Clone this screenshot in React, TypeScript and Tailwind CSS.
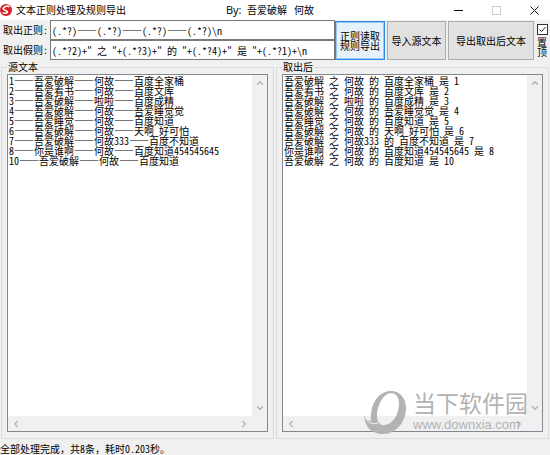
import React, { useState } from "react";
import { ChevronDown, ChevronLeft, ChevronRight, ChevronUp } from "lucide-react";

const SOURCE = [
  "1——吾爱破解——何故——百度全家桶",
  "2——吾爱看书——何故——百度文库",
  "3——吾爱破解——啦啦——百度成精",
  "4——吾爱破解——何故——吾爱睡觉觉",
  "5——吾爱睡觉——何故——百度知道",
  "6——吾爱破解——何故——天啊 好可怕",
  "7——吾爱破解——何故333——百度不知道",
  "8——你是谁啊——何故——百度知道454545645",
  "10——吾爱破解——何故——百度知道",
].join("\n");

const RESULT = [
  "吾爱破解 之 何故 的 百度全家桶 是 1",
  "吾爱看书 之 何故 的 百度文库 是 2",
  "吾爱破解 之 啦啦 的 百度成精 是 3",
  "吾爱破解 之 何故 的 吾爱睡觉觉 是 4",
  "吾爱睡觉 之 何故 的 百度知道 是 5",
  "吾爱破解 之 何故 的 天啊 好可怕 是 6",
  "吾爱破解 之 何故333 的 百度不知道 是 7",
  "你是谁啊 之 何故 的 百度知道454545645 是 8",
  "吾爱破解 之 何故 的 百度知道 是 10",
].join("\n");

function TitleBar() {
  return (
    <header className="flex h-5 items-center bg-white text-[10px] leading-5">
      <svg viewBox="0 0 24 24" className="h-3 w-3 shrink-0" aria-hidden="true">
        <circle cx="12" cy="12" r="12" fill="#d81e26" />
        <path
          d="M19 5.5C14 3 6.500 5 6.500 9.200c0 4.300 8.500 3.300 8.500 6.600 0 2.400-5 3.400-10 1.700"
          fill="none"
          stroke="#fff"
          strokeWidth="3.200"
        />
      </svg>
      <h1 className="ml-1 w-[210px] whitespace-nowrap">文本正则处理及规则导出</h1>
      <p className="flex whitespace-nowrap">
        <span className="w-[21px] font-['Open_Sans',sans-serif] text-[11px]">By:</span>
        <span className="mr-[7px]">吾爱破解</span>
        <span>何故</span>
      </p>
      <div className="ml-auto flex items-center gap-[29px] pr-[11px]">
        <button type="button" aria-label="最小化" className="flex h-3 w-[9px] items-center">
          <span className="h-px w-full bg-black" />
        </button>
        <button type="button" aria-label="最大化" disabled className="flex h-3 w-[9px] items-center">
          <span className="h-[9px] w-full border border-[#cccccc]" />
        </button>
        <button type="button" aria-label="关闭" className="flex h-3 w-[9px] items-center">
          <svg viewBox="0 0 9 9" className="h-[9px] w-[9px]">
            <path d="M.5.5l8 8M8.500.5l-8 8" stroke="#111" fill="none" />
          </svg>
        </button>
      </div>
    </header>
  );
}

function RuleField({ id, label, initial }: { id: string; label: string; initial: string }) {
  const [value, setValue] = useState(initial);
  return (
    <div className="flex h-5 items-center">
      <label htmlFor={id} className="w-[47px] shrink-0 whitespace-nowrap">
        {label}
      </label>
      <input
        id={id}
        value={value}
        onChange={(e) => setValue(e.target.value)}
        className="h-full min-w-0 flex-1 border border-[#7a7a7a] bg-white px-px outline-none"
      />
    </div>
  );
}

function TextPanel({ title, initial }: { title: string; initial: string }) {
  const [value, setValue] = useState(initial);
  return (
    <fieldset className="flex min-w-0 flex-1 flex-col border border-[#dcdcdc] px-[5px] pb-1.5">
      <legend className="px-px leading-[14px]">{title}</legend>
      <div className="grid min-h-0 flex-1 grid-cols-[1fr_15px] grid-rows-[1fr_15px] border border-[#828790] bg-[#f0f0f0] text-[#b0b0b0]">
        <textarea
          aria-label={title}
          wrap="off"
          value={value}
          onChange={(e) => setValue(e.target.value)}
          className="h-full w-full resize-none overflow-hidden bg-white px-px pt-px leading-[10px] text-black outline-none"
        />
        <div className="flex flex-col items-center justify-between py-[3px]">
          <ChevronUp size={10} strokeWidth={3} />
          <ChevronDown size={10} strokeWidth={3} />
        </div>
        <div className="flex items-center justify-between px-[3px]">
          <ChevronLeft size={10} strokeWidth={3} />
          <ChevronRight size={10} strokeWidth={3} />
        </div>
      </div>
    </fieldset>
  );
}

function Watermark() {
  return (
    <div className="pointer-events-none absolute right-[22px] bottom-5 flex items-end gap-1.5 text-[#b3b3b3]">
      <svg viewBox="0 0 43 45" className="h-[45px] w-[43px]" aria-hidden="true">
        <path
          fillRule="evenodd"
          fill="currentColor"
          d="M25 1C35 0 42 7 42 18c0 14-10 26-23 26C8 44 1 38 0 25c2 4 4 6 7 6C6 15 13 3 25 1ZM27 3c-8 1-14 12-14 23 0 6 3 10 8 9 8-1 14-11 14-21 0-7-3-11-8-11Z"
        />
        <path d="M1 27c2 5 7 8 13 6" fill="none" stroke="#f4f4f4" />
      </svg>
      <div className="pb-0.5 whitespace-nowrap">
        <p className="text-[23px] leading-[29px]">当下软件园</p>
        <p className="font-['Liberation_Sans',sans-serif] text-[13px] leading-4">www.downxia.com</p>
      </div>
    </div>
  );
}

function HalfWidth({ children }: { children: string }) {
  return <span className="[font-feature-settings:'hwid']">{children}</span>;
}

export default function App() {
  const [pinned, setPinned] = useState(true);
  return (
    <div
      lang="zh-CN"
      className="relative flex min-h-screen flex-col bg-[#f0f0f0] font-['Noto_Sans_CJK_SC',sans-serif] text-[10px] leading-3 text-black"
    >
      <TitleBar />
      <div className="flex pl-[3px] [font-feature-settings:'hwid']">
        <div className="min-w-0 flex-1">
          <RuleField id="rule" label="取出正则:" initial={"(.*?)——(.*?)——(.*?)——(.*?)\\n"} />
          <RuleField
            id="template"
            label="取出假则:"
            initial={'(.*?2)+" 之 "+(.*?3)+" 的 "+(.*?4)+" 是 "+(.*?1)+\\n'}
          />
        </div>
        <div className="flex gap-0.5 pt-px">
          <button
            type="button"
            className="w-[50px] border border-[#2a8be6] bg-[#e5f1fb] px-0.5 leading-[10px] ring-1 ring-[#2a8be6]/40 ring-inset"
          >
            正则读取规则导出
          </button>
          <button type="button" className="w-[59px] border border-[#adadad] bg-[#e1e1e1] whitespace-nowrap">
            导入源文本
          </button>
          <button type="button" className="w-[86px] border border-[#adadad] bg-[#e1e1e1] whitespace-nowrap">
            导出取出后文本
          </button>
        </div>
        <label className="flex w-4 flex-col items-center pt-1 leading-[10px]">
          <span className="grid h-[11px] w-[11px] place-items-center">
            <input
              type="checkbox"
              checked={pinned}
              onChange={(e) => setPinned(e.target.checked)}
              className="peer col-start-1 row-start-1 h-[11px] w-[11px] appearance-none border border-[#333333] bg-white"
            />
            <svg viewBox="0 0 11 11" className="pointer-events-none invisible col-start-1 row-start-1 h-[11px] w-[11px] peer-checked:visible">
              <path d="M2.500 5.500l2 2 4-4.500" stroke="#222" fill="none" />
            </svg>
          </span>
          <span className="mt-0.5 w-[10px]">置顶</span>
        </label>
      </div>
      <main className="flex flex-1 gap-0.5 px-px [font-feature-settings:'hwid']">
        <TextPanel title="源文本" initial={SOURCE} />
        <TextPanel title="取出后" initial={RESULT} />
      </main>
      <footer className="pt-1 whitespace-nowrap">
        全部处理完成，共<HalfWidth>8</HalfWidth>条，耗时<HalfWidth>0.203</HalfWidth>秒。
      </footer>
      <Watermark />
    </div>
  );
}
